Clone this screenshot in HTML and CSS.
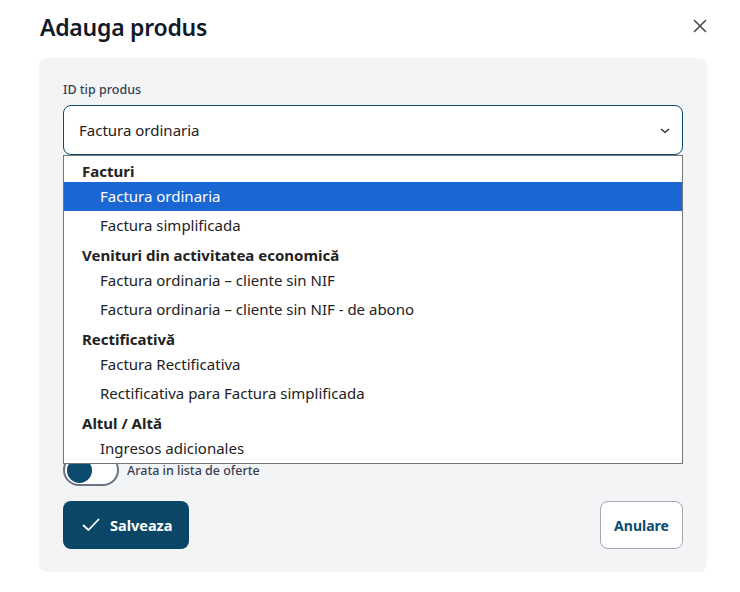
FILE: index.html
```html
<!DOCTYPE html>
<html lang="ro">
<head>
<meta charset="utf-8">
<title>Adauga produs</title>
<link rel="stylesheet" href="styles.css">
</head>
<body>
<div class="modal">
  <header class="modal-head">
    <h1 class="modal-title">Adauga produs</h1>
    <button class="close-btn" aria-label="Închide">
      <svg width="14" height="14" viewBox="0 0 14 14"><path d="M1.5 1.5 L12.5 12.5 M12.5 1.5 L1.5 12.5" stroke="#444" stroke-width="1.5" fill="none" stroke-linecap="round"/></svg>
    </button>
  </header>
  <section class="card">
    <label class="field-label">ID tip produs</label>
    <div class="select-wrap">
      <div class="select">
        <span class="select-value">Factura ordinaria</span>
        <svg class="chevron" width="10" height="6" viewBox="0 0 10 6"><path d="M1 1 L5 4.5 L9 1" stroke="#222" stroke-width="1.3" fill="none"/></svg>
      </div>
      <ul class="popup">
        <li class="group">Facturi</li>
        <li class="opt selected">Factura ordinaria</li>
        <li class="opt">Factura simplificada</li>
        <li class="group">Venituri din activitatea economică</li>
        <li class="opt">Factura ordinaria – cliente sin NIF</li>
        <li class="opt">Factura ordinaria – cliente sin NIF - de abono</li>
        <li class="group">Rectificativă</li>
        <li class="opt">Factura Rectificativa</li>
        <li class="opt">Rectificativa para Factura simplificada</li>
        <li class="group">Altul / Altă</li>
        <li class="opt">Ingresos adicionales</li>
      </ul>
    </div>
    <div class="toggle-row">
      <span class="toggle"><span class="knob"></span></span>
      <span class="toggle-label">Arata in lista de oferte</span>
    </div>
    <div class="actions">
      <button class="btn-primary">
        <svg width="18" height="14" viewBox="0 0 18 14"><path d="M1.5 7.5 L6.5 12 L16.5 1.5" stroke="#fff" stroke-width="1.8" fill="none" stroke-linecap="round" stroke-linejoin="round"/></svg>
        <span>Salveaza</span>
      </button>
      <button class="btn-secondary">Anulare</button>
    </div>
  </section>
</div>
</body>
</html>
```
FILE: styles.css
```css
* { box-sizing: border-box; }
html, body { margin: 0; padding: 0; background: #fff; }
body { font-family: "Noto Sans", "Open Sans", sans-serif; color: #111827; }

.modal { width: 740px; }

.modal-head {
  display: flex;
  justify-content: space-between;
  align-items: flex-start;
  padding: 9px 33px 0 40px;
  height: 58px;
}
.modal-title {
  margin: 0;
  font-size: 23px;
  font-weight: 600;
  line-height: 36px;
  color: #111827;
  letter-spacing: -0.25px;
}
.close-btn {
  border: 0;
  background: none;
  padding: 0;
  margin-top: 10px;
  width: 14px;
  height: 14px;
  display: flex;
}

.card {
  margin: 0 33px 0 39px;
  background: #f3f4f6;
  border-radius: 8px;
  padding: 24px 24px 23px 24px;
  display: flex;
  flex-direction: column;
}
.field-label {
  font-size: 12.5px;
  font-weight: 500;
  color: #374151;
  line-height: 16px;
  margin-bottom: 7px;
}
.select-wrap { position: relative; }
.select {
  height: 50px;
  border: 1px solid #0c4a6e;
  border-radius: 8px;
  background: #fff;
  display: flex;
  align-items: center;
  justify-content: space-between;
  padding: 0 12px 0 15px;
  font-size: 15px;
  color: #222;
}
.chevron { margin-top: 1px; }

.popup {
  position: absolute;
  top: 100%;
  left: 0;
  right: 0;
  margin: 0;
  padding: 0;
  list-style: none;
  background: #fff;
  border: 1px solid #767676;
  font-size: 15px;
  color: #222;
  z-index: 5;
}
.popup .group {
  height: 26px;
  padding: 5px 0 0 18px;
  line-height: 21px;
  font-weight: 700;
  color: #222;
}
.popup .opt {
  height: 29px;
  line-height: 29px;
  padding-left: 36px;
}
.popup .opt.selected {
  background: #1a67d4;
  color: #fff;
}

.toggle-row {
  margin-top: 299px;
  display: flex;
  align-items: center;
  gap: 8px;
  height: 32px;
}
.toggle {
  width: 56px;
  height: 32px;
  border: 2px solid #6b7280;
  border-radius: 16px;
  background: #fff;
  display: flex;
  align-items: center;
  padding-left: 2px;
}
.knob {
  width: 25px;
  height: 25px;
  border-radius: 50%;
  background: #0c4a6e;
}
.toggle-label {
  font-size: 12.5px;
  font-weight: 500;
  color: #374151;
}

.actions {
  margin-top: 15px;
  display: flex;
  justify-content: space-between;
}
.btn-primary {
  height: 48px;
  width: 126px;
  border: 0;
  border-radius: 8px;
  background: #0c4667;
  color: #fff;
  font-family: inherit;
  font-size: 14.5px;
  font-weight: 700;
  display: flex;
  align-items: center;
  gap: 10px;
  padding: 0 0 0 19px;
}
.btn-secondary {
  height: 48px;
  width: 83px;
  border: 1px solid #a3a8b3;
  border-radius: 8px;
  background: #fff;
  color: #0c4a6e;
  font-family: inherit;
  font-size: 14px;
  font-weight: 700;
  padding: 0;
}
```
